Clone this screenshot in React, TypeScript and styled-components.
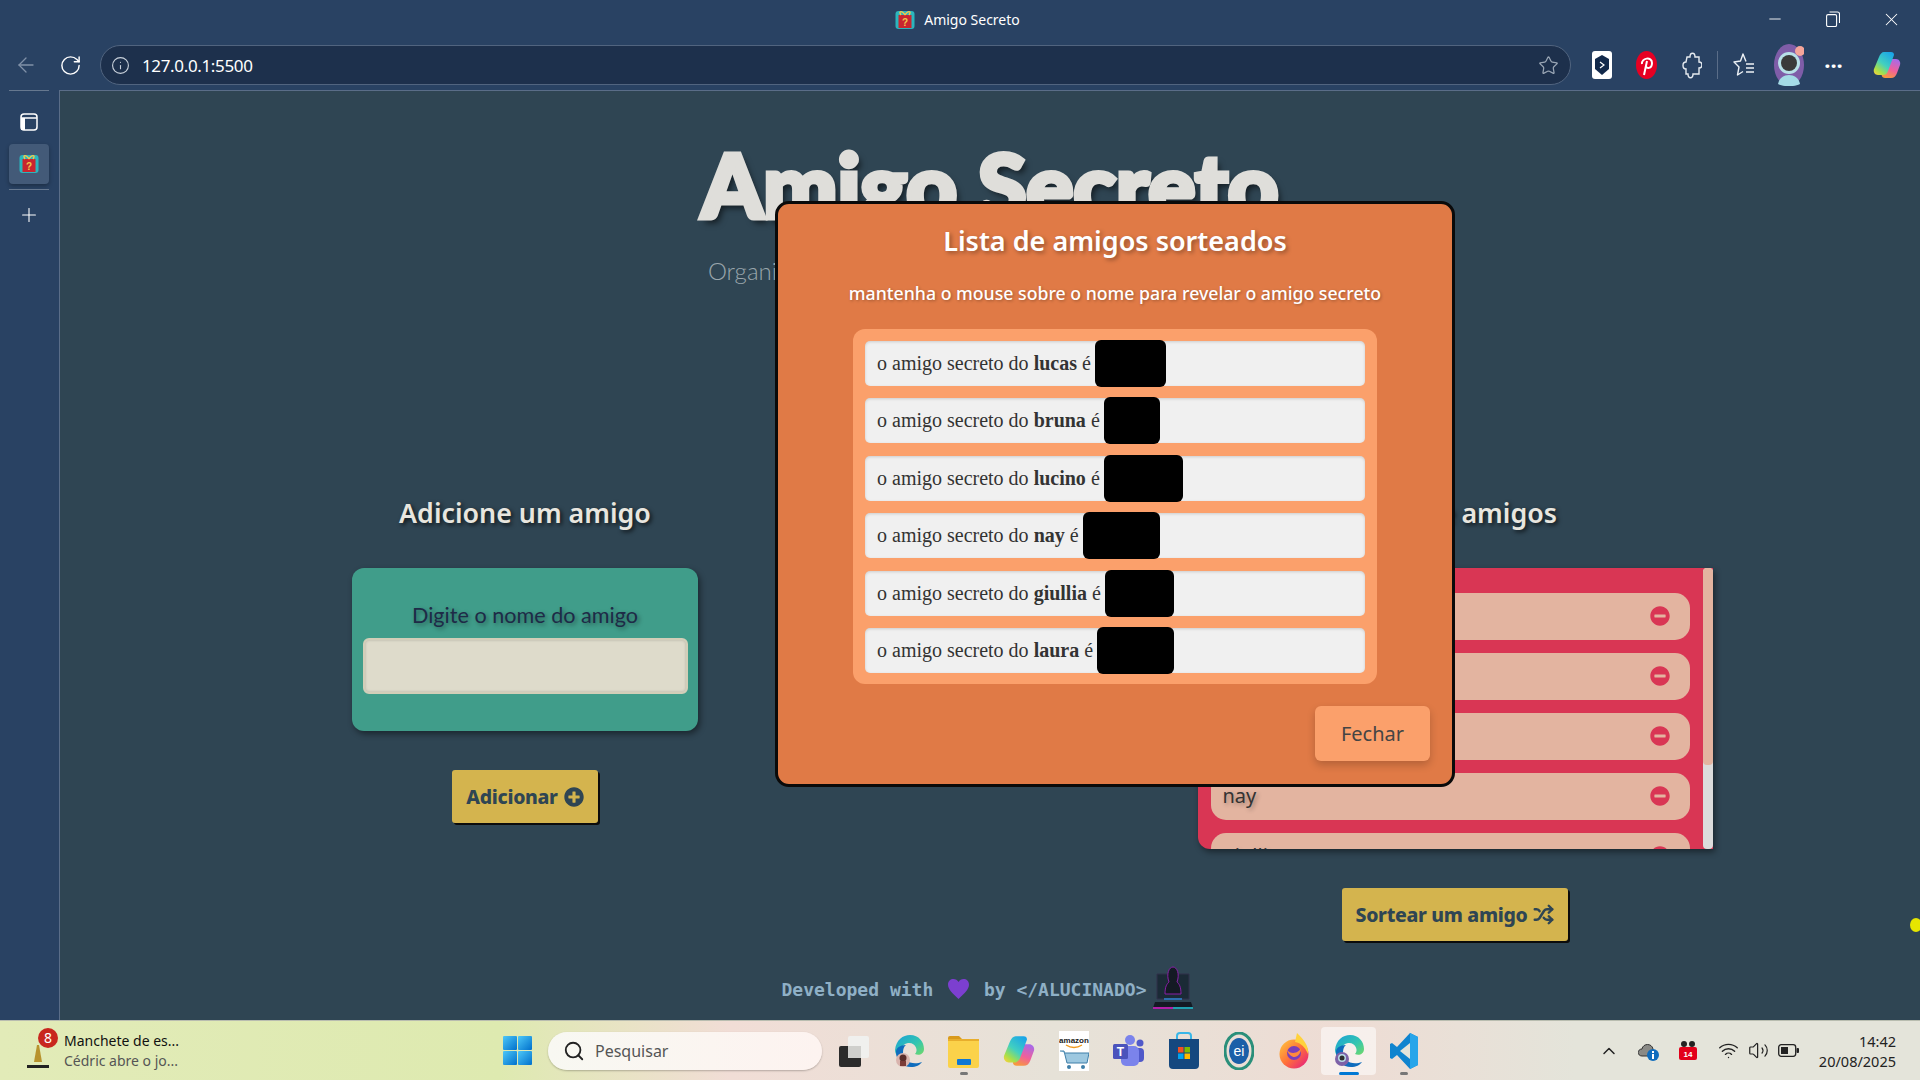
import { ArrowLeft, Info, Minus, Plus, RotateCw, Search, Shuffle, Star, X, ChevronUp, Wifi, Volume2 } from "lucide-react"
import { FaMinusCircle, FaPlusCircle } from "react-icons/fa"
import styled, { createGlobalStyle } from "styled-components"

const GlobalStyle = createGlobalStyle`
  html, body {
    margin: 0;
    height: 100%;
    overflow: hidden;
  }
  * {
    box-sizing: border-box;
  }
`

const sorteados = [
  { name: "lucas", width: 71 },
  { name: "bruna", width: 56 },
  { name: "lucino", width: 79 },
  { name: "nay", width: 77 },
  { name: "giullia", width: 69 },
  { name: "laura", width: 77 },
]

const amigos = ["lucas", "bruna", "lucino", "nay", "giullia", "laura"]

const GiftIcon = ({ size = 20 }: { size?: number }) => (
  <svg width={size} height={size} viewBox="0 0 20 20">
    <rect x="0.5" y="1" width="19" height="18" rx="3" fill="#2bb5bd" />
    <rect x="3.5" y="5" width="13" height="13" fill="#c9252f" />
    <path d="M10 5 C7 0 3 1 6 5 M10 5 C13 0 17 1 14 5" fill="none" stroke="#f2c94c" strokeWidth="1.4" />
    <text x="10" y="15.5" fontSize="10" fontWeight="700" fontFamily="Liberation Sans, sans-serif" textAnchor="middle" fill="#f2c94c">?</text>
  </svg>
)

const CopilotIcon = ({ size = 28, id }: { size?: number; id: string }) => (
  <svg width={size} height={size} viewBox="0 0 28 28">
    <defs>
      <linearGradient id={`${id}A`} x1="0.8" y1="0" x2="0.1" y2="1">
        <stop offset="0" stopColor="#1aa5e8" />
        <stop offset="0.5" stopColor="#42d0c0" />
        <stop offset="0.8" stopColor="#a6e04a" />
        <stop offset="1" stopColor="#f4d23c" />
      </linearGradient>
      <linearGradient id={`${id}B`} x1="0.7" y1="0" x2="0.3" y2="1">
        <stop offset="0" stopColor="#a86ae8" />
        <stop offset="0.55" stopColor="#f0609a" />
        <stop offset="1" stopColor="#f79a3c" />
      </linearGradient>
    </defs>
    <path d="M19 8 h4 c3 0 5 3 4 6 l-3 8 c-1 3 -3 5 -6 5 h-6 c-3 0 -4 -3 -3 -5 l6 -10 c1 -3 2 -4 4 -4z" fill={`url(#${id}B)`} />
    <path d="M11 1 h7 c2 0 3 1 3 3 l-6 16 c-1 3 -3 4 -5 4 h-5 c-3 0 -5 -3 -4 -6 l5 -12 c1 -3 3 -5 5 -5z" fill={`url(#${id}A)`} />
  </svg>
)

const EdgeIcon = ({ badge }: { badge: "photo" | "astro" }) => (
  <svg width="32" height="34" viewBox="0 0 32 34">
    <defs>
      <linearGradient id={`edge-${badge}`} x1="0" y1="0" x2="1" y2="1">
        <stop offset="0" stopColor="#1a9fd8" />
        <stop offset="0.55" stopColor="#33c6b0" />
        <stop offset="1" stopColor="#7edc5a" />
      </linearGradient>
    </defs>
    <path d="M2 16 C3 6 10 1 17 1 C26 1 31 8 31 15 C31 20 26 22 22 20 C26 16 22 8 15 9 C8 10 6 18 9 24 C5 24 2 20 2 16z" fill={`url(#edge-${badge})`} />
    <path d="M3 18 C3 27 10 33 18 33 C23 33 27 31 29 28 C24 30 17 30 13 26 C9 22 9 14 13 11 C7 11 3 14 3 18z" fill="#0f6cbd" />
    {badge === "photo" ? (
      <>
        <circle cx="10" cy="26" r="7" fill="#d9b4ae" />
        <circle cx="10" cy="24" r="3.5" fill="#5a2d2a" />
        <rect x="7" y="27" width="6" height="5" fill="#7a3c38" />
      </>
    ) : (
      <>
        <circle cx="9" cy="25" r="7" fill="#7d62a8" />
        <circle cx="9" cy="24" r="4" fill="#b8dbe6" />
        <circle cx="9" cy="24" r="2.5" fill="#2e2e2e" />
      </>
    )}
  </svg>
)

const ExplorerIcon = () => (
  <svg width="31" height="36" viewBox="0 0 31 36">
    <path d="M0 5 a2 2 0 0 1 2 -2 h9 l3 3 h-14z" fill="#d99a1c" />
    <path d="M0 6 h31 v27 a2 2 0 0 1 -2 2 h-27 a2 2 0 0 1 -2 -2z" fill="#fbd24a" />
    <path d="M0 6 h31 v2 h-31z" fill="#e8ae2c" />
    <rect x="9" y="26" width="14" height="6" rx="1" fill="#0f78d4" />
  </svg>
)

const AmazonIcon = () => (
  <svg width="30" height="40" viewBox="0 0 30 40">
    <rect width="30" height="40" fill="#fff" />
    <text x="15" y="12" fontSize="8" fontWeight="700" fontFamily="Liberation Sans, sans-serif" textAnchor="middle" fill="#222">amazon</text>
    <path d="M7 14 Q15 19 23 14" fill="none" stroke="#f09a1e" strokeWidth="1.4" />
    <path d="M1 20 h4 l3 12 h20 l2 -10 h-24" fill="#9dc8e0" stroke="#3f7fa8" strokeWidth="1" />
    <circle cx="10" cy="36" r="2" fill="#3f7fa8" />
    <circle cx="24" cy="36" r="2" fill="#3f7fa8" />
  </svg>
)

const TeamsIcon = () => (
  <svg width="32" height="34" viewBox="0 0 32 34">
    <circle cx="17" cy="6" r="5" fill="#7b83eb" />
    <circle cx="27" cy="9" r="3.5" fill="#5059c9" />
    <rect x="20" y="14" width="11" height="14" rx="4" fill="#5059c9" />
    <rect x="8" y="12" width="18" height="20" rx="5" fill="#7b83eb" />
    <rect x="0" y="10" width="15" height="15" rx="1.5" fill="#4b53bc" />
    <text x="7.5" y="22" fontSize="12" fontWeight="700" fontFamily="Liberation Sans, sans-serif" textAnchor="middle" fill="#fff">T</text>
  </svg>
)

const StoreIcon = () => (
  <svg width="30" height="38" viewBox="0 0 30 38">
    <path d="M8 7 V4 a3 3 0 0 1 3 -3 h8 a3 3 0 0 1 3 3 v3" fill="none" stroke="#38b6e8" strokeWidth="2" />
    <path d="M0 7 h30 v26 a4 4 0 0 1 -4 4 h-22 a4 4 0 0 1 -4 -4z" fill="#15487f" />
    <rect x="9" y="15" width="5.5" height="5.5" fill="#f25022" />
    <rect x="15.5" y="15" width="5.5" height="5.5" fill="#7fba00" />
    <rect x="9" y="21.5" width="5.5" height="5.5" fill="#00a4ef" />
    <rect x="15.5" y="21.5" width="5.5" height="5.5" fill="#ffb900" />
  </svg>
)

const EiIcon = () => (
  <svg width="30" height="38" viewBox="0 0 30 38">
    <ellipse cx="15" cy="19" rx="14" ry="18" fill="none" stroke="#2a8f7a" strokeWidth="3" />
    <ellipse cx="15" cy="19" rx="10" ry="13" fill="#1a5fa8" />
    <text x="15" y="24" fontSize="14" fontFamily="Liberation Sans, sans-serif" textAnchor="middle" fill="#fff">ei</text>
  </svg>
)

const FirefoxIcon = () => (
  <svg width="30" height="36" viewBox="0 0 30 36">
    <defs>
      <linearGradient id="fox" x1="0" y1="0" x2="1" y2="1">
        <stop offset="0" stopColor="#ffcb3c" />
        <stop offset="0.5" stopColor="#ff7139" />
        <stop offset="1" stopColor="#e31587" />
      </linearGradient>
    </defs>
    <circle cx="15" cy="21" r="14.5" fill="url(#fox)" />
    <path d="M18 0 C24 6 30 12 29 21 C26 14 22 10 16 9z" fill="#ffd23c" />
    <circle cx="15" cy="20" r="7" fill="#7b3fb8" />
    <path d="M8 17 C12 22 20 20 22 15 C22 25 12 28 8 17z" fill="#ff8a3c" />
  </svg>
)

const VsCodeIcon = () => (
  <svg width="28" height="36" viewBox="0 0 28 36">
    <path d="M20 0 L28 4 V32 L20 36 L7 22 L2 26 L0 25 V11 L2 10 L7 14z" fill="#0f84cf" />
    <path d="M20 0 L28 4 V32 L20 36z" fill="#27a5ea" />
    <path d="M20 10 V26 L10 18z" fill="#e4e4da" />
  </svg>
)

const TaskViewIcon = () => (
  <svg width="30" height="32" viewBox="0 0 30 32">
    <rect x="9" y="1" width="21" height="22" rx="2" fill="#f0f0ee" />
    <rect x="0" y="11" width="22" height="21" rx="2" fill="#2b2b2b" />
    <rect x="9" y="11" width="13" height="12" fill="#cfcfcc" />
  </svg>
)

const WindowsLogo = () => (
  <svg width="29" height="29" viewBox="0 0 29 29">
    <defs>
      <linearGradient id="win" x1="0" y1="0" x2="1" y2="1">
        <stop offset="0" stopColor="#4dc8f8" />
        <stop offset="1" stopColor="#0070cc" />
      </linearGradient>
    </defs>
    <rect width="14" height="14" rx="1" fill="url(#win)" />
    <rect x="15" width="14" height="14" rx="1" fill="url(#win)" />
    <rect y="15" width="14" height="14" rx="1" fill="url(#win)" />
    <rect x="15" y="15" width="14" height="14" rx="1" fill="url(#win)" />
  </svg>
)

const Avatar = () => (
  <svg width="30" height="42" viewBox="0 0 30 42">
    <ellipse cx="15" cy="21" rx="15" ry="21" fill="#7f5da8" />
    <path d="M4 40 C6 28 24 28 26 40 C20 43 10 43 4 40z" fill="#a4dbe6" />
    <circle cx="15" cy="19" r="11" fill="#b8e0e8" />
    <circle cx="15" cy="19" r="8" fill="#3a3a3a" />
    <circle cx="26" cy="7" r="5" fill="#f5a59a" />
  </svg>
)

const HackerIcon = () => (
  <svg width="42" height="44" viewBox="0 0 42 44">
    <path d="M5 8 H37 V33 H5z" fill="#1b2a36" stroke="#30304a" />
    <path d="M13 28 C13 20 15 18 17 16 C14 8 17 1 21 1 C25 1 28 8 25 16 C27 18 29 20 29 28z" fill="#141a24" stroke="#8a1fa8" strokeWidth="1" />
    <path d="M12 33 H30" stroke="#2d6fb0" strokeWidth="2" />
    <path d="M3 36 H39 L41 42 H1z" fill="#141a24" />
    <path d="M1 42 H21" stroke="#b01fa8" strokeWidth="2" />
    <path d="M21 42 H41" stroke="#1fa0b0" strokeWidth="2" />
  </svg>
)

const HeartIcon = () => (
  <svg width="21" height="22" viewBox="0 0 21 22">
    <path d="M10.5 21 C4 15 0 11 0 6.5 C0 3 2.5 1 5.5 1 C7.5 1 9.5 2 10.5 4 C11.5 2 13.5 1 15.5 1 C18.5 1 21 3 21 6.5 C21 11 17 15 10.5 21z" fill="#7c3fd0" />
  </svg>
)

const App = () => {
  return (
    <Screen>
      <GlobalStyle />
      <TitleBar>
        <span />
        <WindowTitle>
          <GiftIcon />
          Amigo Secreto
        </WindowTitle>
        <WindowControls>
          <WindowControl><Minus size={18} strokeWidth={1.2} /></WindowControl>
          <WindowControl>
            <svg width="14" height="16" viewBox="0 0 14 16">
              <rect x="0.6" y="3.6" width="10" height="12" rx="1.5" fill="none" stroke="#fff" strokeWidth="1.1" />
              <path d="M3.5 1 H11.5 a2 2 0 0 1 2 2 V12" fill="none" stroke="#fff" strokeWidth="1.1" />
            </svg>
          </WindowControl>
          <WindowControl><X size={21} strokeWidth={1.2} /></WindowControl>
        </WindowControls>
      </TitleBar>
      <Toolbar>
        <NavButton $dim><ArrowLeft size={24} strokeWidth={1.3} /></NavButton>
        <NavButton><RotateCw size={23} strokeWidth={1.5} /></NavButton>
        <AddressBar>
          <Info size={19} strokeWidth={1.4} color="#c9d1db" />
          <AddressText>127.0.0.1:5500</AddressText>
          <AddressStar><Star size={21} strokeWidth={1.4} color="#9aa6b5" /></AddressStar>
        </AddressBar>
        <ToolButton>
          <svg width="20" height="28" viewBox="0 0 20 28">
            <rect width="20" height="28" rx="3" fill="#fff" />
            <path d="M10 4 L17 8 V18 L10 24 L3 18 V8z" fill="#12294b" />
            <path d="M8 11 L12 14 L8 17" fill="none" stroke="#fff" strokeWidth="1.2" />
          </svg>
        </ToolButton>
        <ToolButton>
          <svg width="21" height="28" viewBox="0 0 21 28">
            <ellipse cx="10.5" cy="14" rx="10.5" ry="14" fill="#e60023" />
            <path d="M8 24 L11 10 M6 13 C5 7 16 5 16 12 C16 18 10 18 10 15" fill="none" stroke="#fff" strokeWidth="2" />
          </svg>
        </ToolButton>
        <ToolButton>
          <svg width="20" height="28" viewBox="0 0 20 28">
            <path d="M5 6 H8 C8 1 13 1 13 6 H17 V11 C21 11 21 17 17 17 V23 H11 C11 28 6 28 6 23 H4 V18 C0 18 0 11 4 11z" fill="none" stroke="#e6ebf0" strokeWidth="1.4" />
          </svg>
        </ToolButton>
        <ToolDivider />
        <ToolButton>
          <svg width="22" height="26" viewBox="0 0 22 26">
            <path d="M13 9.5 L10 2 L7.5 9 L1 10 L6 15 L4.5 23 L10 19.5" fill="none" stroke="#eef2f6" strokeWidth="1.4" strokeLinejoin="round" />
            <path d="M13 12 H21 M13 16 H21 M13 20 H21" stroke="#eef2f6" strokeWidth="1.4" />
          </svg>
        </ToolButton>
        <ToolButton><Avatar /></ToolButton>
        <ToolButton><MoreDots>···</MoreDots></ToolButton>
        <CopilotButton><CopilotIcon id="copTool" /></CopilotButton>
      </Toolbar>
      <Body>
        <SideBar>
          <SideLine />
          <TabsIcon>
            <svg width="18" height="18" viewBox="0 0 18 18">
              <rect x="1" y="1" width="16" height="16" rx="3" fill="none" stroke="#fff" strokeWidth="1.5" />
              <path d="M1 5 H17" stroke="#fff" strokeWidth="1.5" />
              <rect x="1" y="5" width="4" height="12" fill="#fff" />
            </svg>
          </TabsIcon>
          <ActiveTab><GiftIcon /></ActiveTab>
          <SideLine />
          <SideIcon><Plus size={22} strokeWidth={1.2} /></SideIcon>
        </SideBar>
        <Page>
          <Hero>
            <MainTitle>Amigo Secreto</MainTitle>
            <Subtitle>Organize seu sorteio de amigo secreto de forma online</Subtitle>
          </Hero>
          <Columns>
            <Column>
              <SectionTitle>Adicione um amigo</SectionTitle>
              <InputCard>
                <InputLabel>Digite o nome do amigo</InputLabel>
                <NameInput type="text" />
              </InputCard>
              <ActionButton>
                Adicionar
                <FaPlusCircle size={20} />
              </ActionButton>
            </Column>
            <Column>
              <SectionTitle>Lista de amigos</SectionTitle>
              <ListCard>
                <ListScroll>
                  {amigos.map((nome) => (
                    <FriendItem key={nome}>
                      {nome}
                      <FaMinusCircle size={20} color="#d93654" />
                    </FriendItem>
                  ))}
                </ListScroll>
                <ScrollTrack><ScrollThumb /></ScrollTrack>
              </ListCard>
              <ActionButton>
                Sortear um amigo
                <Shuffle size={21} strokeWidth={2.8} />
              </ActionButton>
            </Column>
          </Columns>
          <Footer>
            Developed with <HeartIcon /> by &lt;/ALUCINADO&gt;
            <HackerMark><HackerIcon /></HackerMark>
          </Footer>
          <Modal>
            <ModalTitle>Lista de amigos sorteados</ModalTitle>
            <ModalHint>mantenha o mouse sobre o nome para revelar o amigo secreto</ModalHint>
            <ResultList>
              {sorteados.map((item) => (
                <ResultRow key={item.name}>
                  <span>o amigo secreto do <b>{item.name}</b> é</span>
                  <Spoiler $width={item.width} />
                </ResultRow>
              ))}
            </ResultList>
            <CloseButton>Fechar</CloseButton>
          </Modal>
          <CursorDot />
        </Page>
      </Body>
      <TaskBar>
        <NewsWidget>
          <NewsLogo>
            <svg width="24" height="30" viewBox="0 0 24 30">
              <path d="M11 4 L13 4 L16 21 H8z" fill="#b8932e" />
              <rect x="1" y="24" width="22" height="3" fill="#222" />
            </svg>
            <NewsBadge>8</NewsBadge>
          </NewsLogo>
          <NewsText>
            <NewsHead>Manchete de es...</NewsHead>
            <NewsSub>Cédric abre o jo...</NewsSub>
          </NewsText>
        </NewsWidget>
        <TaskCenter>
          <TaskIcon $width={29}><WindowsLogo /></TaskIcon>
          <SearchPill>
            <Search size={22} strokeWidth={2} color="#222" />
            Pesquisar
          </SearchPill>
          <TaskIcon><TaskViewIcon /></TaskIcon>
          <TaskIcon><EdgeIcon badge="photo" /></TaskIcon>
          <TaskIcon $running><ExplorerIcon /></TaskIcon>
          <TaskIcon><CopilotIcon size={32} id="copTask" /></TaskIcon>
          <TaskIcon><AmazonIcon /></TaskIcon>
          <TaskIcon><TeamsIcon /></TaskIcon>
          <TaskIcon><StoreIcon /></TaskIcon>
          <TaskIcon><EiIcon /></TaskIcon>
          <TaskIcon><FirefoxIcon /></TaskIcon>
          <TaskIcon $active><EdgeIcon badge="astro" /></TaskIcon>
          <TaskIcon $running><VsCodeIcon /></TaskIcon>
        </TaskCenter>
        <Tray>
          <TrayIcon $width={48}><ChevronUp size={20} strokeWidth={1.8} /></TrayIcon>
          <TrayIcon $width={32}>
            <svg width="22" height="22" viewBox="0 0 22 22">
              <path d="M4 16 C-1 16 -1 9 4 9 C5 3 14 3 15 9 L15 16z" fill="#8a8a86" stroke="#333" />
              <circle cx="15" cy="15" r="6" fill="#0f6cbd" />
              <rect x="14" y="14" width="2" height="5" fill="#fff" />
              <rect x="14" y="11" width="2" height="2" fill="#fff" />
            </svg>
          </TrayIcon>
          <TrayIcon $width={46}>
            <svg width="20" height="20" viewBox="0 0 20 20">
              <rect x="1" y="6" width="18" height="13" rx="2" fill="#e2001a" />
              <circle cx="6" cy="3" r="3" fill="#222" />
              <circle cx="14" cy="3" r="3" fill="#222" />
              <text x="10" y="16" fontSize="8" fontWeight="700" fontFamily="Liberation Sans, sans-serif" textAnchor="middle" fill="#fff">14</text>
            </svg>
          </TrayIcon>
          <TrayIcon $width={36}><Wifi size={21} strokeWidth={1.6} /></TrayIcon>
          <TrayIcon $width={24}><Volume2 size={21} strokeWidth={1.4} /></TrayIcon>
          <TrayIcon $width={36}>
            <svg width="21" height="13" viewBox="0 0 21 13">
              <rect x="0.7" y="0.7" width="17" height="11.6" rx="2.5" fill="none" stroke="#222" strokeWidth="1.3" />
              <rect x="3" y="3" width="7" height="7" fill="#222" />
              <rect x="18.5" y="4" width="2.5" height="5" rx="1" fill="#222" />
            </svg>
          </TrayIcon>
          <Clock>
            <span>14:42</span>
            <span>20/08/2025</span>
          </Clock>
        </Tray>
      </TaskBar>
    </Screen>
  )
}

export default App

const Screen = styled.div`
  width: 1920px;
  height: 1080px;
  display: flex;
  flex-direction: column;
  background: #294263;
  font-family: "Noto Sans", sans-serif;
  overflow: hidden;
`

const TitleBar = styled.div`
  height: 45px;
  display: grid;
  grid-template-columns: 1fr auto 1fr;
  align-items: center;
  color: #fff;
`

const WindowTitle = styled.div`
  display: flex;
  align-items: center;
  gap: 9px;
  font-size: 14px;
  margin: -6px 5px 0 0;
`

const WindowControls = styled.div`
  display: flex;
  justify-content: flex-end;
  margin-top: -7px;
`

const WindowControl = styled.div`
  width: 58px;
  height: 38px;
  display: flex;
  align-items: center;
  justify-content: center;
  color: #fff;
`

const Toolbar = styled.div`
  height: 45px;
  display: flex;
  align-items: center;
  padding: 0 11px 5px 3px;
`

const NavButton = styled.div<{ $dim?: boolean }>`
  width: 45px;
  display: flex;
  justify-content: center;
  color: ${(p) => (p.$dim ? "#8091a8" : "#fff")};
`

const AddressBar = styled.div`
  flex: 1;
  height: 40px;
  margin: 0 8px 0 7px;
  padding: 0 11px 0 10px;
  display: flex;
  align-items: center;
  gap: 12px;
  background: #1d304c;
  border: 1px solid #51647f;
  border-radius: 20px;
`

const AddressText = styled.span`
  color: #fff;
  font-size: 17px;
  letter-spacing: -0.35px;
`

const AddressStar = styled.span`
  margin-left: auto;
  display: flex;
`

const ToolButton = styled.div`
  width: 45px;
  height: 42px;
  display: flex;
  align-items: center;
  justify-content: center;
`

const ToolDivider = styled.div`
  width: 1px;
  height: 28px;
  margin: 0 3px;
  background: #5a6d88;
`

const MoreDots = styled.span`
  color: #fff;
  font-size: 22px;
  font-weight: 700;
`

const CopilotButton = styled(ToolButton)`
  margin-left: 8px;
`

const Body = styled.div`
  flex: 1;
  display: flex;
  min-height: 0;
`

const SideBar = styled.div`
  width: 59px;
  flex-shrink: 0;
  display: flex;
  flex-direction: column;
  align-items: center;
  padding-right: 1px;
`

const SideLine = styled.div`
  width: 40px;
  height: 1px;
  background: #66788f;
`

const SideIcon = styled.div`
  height: 50px;
  display: flex;
  align-items: center;
  justify-content: center;
  color: #fff;
`

const TabsIcon = styled(SideIcon)`
  height: 52px;
  padding-top: 10px;
`

const ActiveTab = styled.div`
  width: 40px;
  height: 40px;
  margin: 1px 0 5px;
  display: flex;
  align-items: center;
  justify-content: center;
  background: #435a78;
  border-radius: 4px;
  box-shadow: 0 2px 4px rgba(0, 0, 0, 0.3);
`

const Page = styled.main`
  position: relative;
  flex: 1;
  display: flex;
  flex-direction: column;
  background: #2f4553;
  border-left: 1px solid #5a6d88;
  border-top: 1px solid #5a6d88;
`

const Hero = styled.div`
  height: 380px;
  display: flex;
  flex-direction: column;
  align-items: center;
  padding-top: 40px;
`

const MainTitle = styled.h1`
  margin: 0;
  font-family: "Lato", sans-serif;
  font-weight: 900;
  font-size: 88px;
  line-height: 106px;
  letter-spacing: 0;
  color: #dfdeda;
  -webkit-text-stroke: 5px #dfdeda;
  text-shadow: 4px 5px 6px rgba(0, 0, 0, 0.6);
`

const Subtitle = styled.p`
  margin: 19px 0 0;
  font-family: "Lato", sans-serif;
  font-weight: 300;
  font-size: 24px;
  color: #9aa6ac;
`

const Columns = styled.div`
  display: grid;
  grid-template-columns: 1fr 1fr;
`

const Column = styled.section`
  display: flex;
  flex-direction: column;
  align-items: center;
`

const SectionTitle = styled.h2`
  margin: 20px 0 33px;
  height: 44px;
  font-family: "Noto Sans", sans-serif;
  font-size: 26.8px;
  font-weight: 600;
  line-height: 44px;
  color: #e8e6df;
  text-shadow: 2px 2px 4px rgba(0, 0, 0, 0.7);
`

const InputCard = styled.div`
  width: 346px;
  height: 163px;
  padding-top: 32px;
  display: flex;
  flex-direction: column;
  align-items: center;
  background: #409d8a;
  border-radius: 12px;
  box-shadow: 2px 3px 6px rgba(0, 0, 0, 0.45);
`

const InputLabel = styled.label`
  font-family: "Lato", sans-serif;
  font-size: 21.6px;
  line-height: 30px;
  color: #1e2b47;
  text-shadow: 2px 2px 4px rgba(0, 0, 0, 0.4);
`

const NameInput = styled.input`
  width: 325px;
  height: 56px;
  margin-top: 8px;
  background: #dedbcb;
  border: 2px solid #d2ceb8;
  border-radius: 6px;
  box-shadow: inset 0 0 3px rgba(0, 0, 0, 0.2);
`

const ActionButton = styled.button`
  height: 53px;
  margin-top: 39px;
  padding: 0 14px;
  display: flex;
  align-items: center;
  gap: 6px;
  background: #d4b44e;
  border: none;
  border-radius: 3px;
  box-shadow: 2px 2px 0 #0c0c0c;
  color: #2f4553;
  font-family: "Noto Sans", sans-serif;
  font-size: 19.4px;
  font-weight: 800;
  letter-spacing: -0.3px;
`

const ListCard = styled.div`
  width: 515px;
  height: 281px;
  display: flex;
  background: #d93654;
  border-radius: 12px 0 0 12px;
  box-shadow: 2px 3px 6px rgba(0, 0, 0, 0.45);
  overflow: hidden;
`

const ListScroll = styled.ul`
  flex: 1;
  margin: 0;
  padding: 25px 13px 0 13px;
  list-style: none;
  display: flex;
  flex-direction: column;
  gap: 13px;
  overflow: hidden;
`

const FriendItem = styled.li`
  flex-shrink: 0;
  height: 47px;
  padding: 0 20px 2px 12px;
  display: flex;
  align-items: center;
  justify-content: space-between;
  background: #e3b4a0;
  border-radius: 15px;
  color: #333;
  font-family: "Noto Sans", sans-serif;
  font-size: 20px;
  text-shadow: 2px 2px 4px rgba(0, 0, 0, 0.3);
`

const ScrollTrack = styled.div`
  width: 10px;
  flex-shrink: 0;
  background: #dcdcdc;
  border-radius: 4px;
`

const ScrollThumb = styled.div`
  height: 197px;
  background: #e3b4a0;
  border-radius: 4px;
`

const Footer = styled.footer`
  margin-top: auto;
  height: 62px;
  display: flex;
  align-items: center;
  justify-content: center;
  font-family: "DejaVu Sans Mono", monospace;
  font-size: 18px;
  font-weight: 700;
  white-space: pre;
  color: #8fb0c6;

  svg {
    margin: 0 4px;
  }
`

const HackerMark = styled.span`
  display: flex;
  margin: -2px 0 0 2px;
`

const Modal = styled.div`
  position: absolute;
  left: 715px;
  top: 110px;
  width: 680px;
  height: 586px;
  display: flex;
  flex-direction: column;
  align-items: center;
  background: #e07a46;
  border: 3px solid #0a0a0a;
  border-radius: 14px;
  padding-top: 17px;
`

const ModalTitle = styled.h2`
  margin: 0;
  font-family: "Noto Sans", sans-serif;
  font-size: 27px;
  font-weight: 600;
  line-height: 40px;
  color: #fff;
  text-shadow: 2px 2px 4px rgba(0, 0, 0, 0.35);
`

const ModalHint = styled.p`
  margin: 18px 0 0;
  font-family: "Noto Sans", sans-serif;
  font-size: 17.7px;
  font-weight: 500;
  line-height: 28px;
  color: #fff;
  text-shadow: 1px 1px 3px rgba(0, 0, 0, 0.3);
`

const ResultList = styled.div`
  width: 524px;
  height: 355px;
  margin-top: 22px;
  padding: 12px;
  display: flex;
  flex-direction: column;
  gap: 12.4px;
  background: #fba06b;
  border-radius: 12px;
`

const ResultRow = styled.div`
  height: 45px;
  flex-shrink: 0;
  padding-left: 12px;
  display: flex;
  align-items: center;
  gap: 4px;
  background: #f0f0f0;
  border-radius: 5px;
  box-shadow: inset 0 1px 3px rgba(0, 0, 0, 0.15);
  color: #333;
  font-family: "Liberation Serif", serif;
  font-size: 20px;
`

const Spoiler = styled.span<{ $width: number }>`
  width: ${(p) => p.$width}px;
  height: 47px;
  margin: -1px 0;
  background: #000;
  border-radius: 6px;
`

const CloseButton = styled.button`
  align-self: flex-end;
  width: 115px;
  height: 55px;
  margin: 22px 22px 0 0;
  background: #fba06b;
  border: none;
  border-radius: 6px;
  box-shadow: 0 4px 8px rgba(0, 0, 0, 0.2);
  color: #444;
  font-family: "Noto Sans", sans-serif;
  font-size: 20px;
`

const CursorDot = styled.div`
  position: absolute;
  right: -2px;
  top: 827px;
  width: 12px;
  height: 14px;
  border-radius: 50%;
  background: #e6e600;
`

const TaskBar = styled.div`
  height: 60px;
  flex-shrink: 0;
  position: relative;
  display: flex;
  align-items: center;
  border-top: 1px solid #b9bdb0;
  background: linear-gradient(90deg, #e2ebb8 0%, #deeab0 26%, #f1ddd6 38%, #e6e2d8 55%, #eedcd4 70%, #e4e4da 82%);
`

const NewsWidget = styled.div`
  width: 503px;
  flex-shrink: 0;
  padding-left: 26px;
  display: flex;
  align-items: center;
`

const NewsLogo = styled.div`
  position: relative;
  width: 38px;
  display: flex;
  margin-top: 10px;
`

const NewsBadge = styled.span`
  position: absolute;
  left: 12px;
  top: -13px;
  width: 20px;
  height: 20px;
  display: flex;
  align-items: center;
  justify-content: center;
  background: #c8271e;
  border-radius: 50%;
  color: #fff;
  font-size: 14px;
`

const NewsText = styled.div`
  display: flex;
  flex-direction: column;
  font-size: 14px;
  line-height: 20px;
`

const NewsHead = styled.span`
  color: #111;
`

const NewsSub = styled.span`
  color: #555;
`

const TaskCenter = styled.div`
  display: flex;
  align-items: center;
`

const TaskIcon = styled.div<{ $active?: boolean; $running?: boolean; $width?: number }>`
  position: relative;
  width: ${(p) => p.$width ?? 55}px;
  height: 48px;
  display: flex;
  align-items: center;
  justify-content: center;
  border-radius: 4px;
  background: ${(p) => (p.$active ? "rgba(255, 255, 255, 0.55)" : "transparent")};

  &::after {
    content: "";
    display: ${(p) => (p.$active || p.$running ? "block" : "none")};
    position: absolute;
    bottom: 0;
    left: 50%;
    transform: translateX(-50%);
    width: ${(p) => (p.$active ? 20 : 8)}px;
    height: 3px;
    border-radius: 2px;
    background: ${(p) => (p.$active ? "#0078d4" : "#777")};
  }
`

const SearchPill = styled.div`
  width: 274px;
  height: 38px;
  margin: 0 4px 0 16px;
  padding-left: 15px;
  display: flex;
  align-items: center;
  gap: 10px;
  background: linear-gradient(90deg, #f8f8f2, #fdf3f0);
  border-radius: 19px;
  box-shadow: 0 1px 2px rgba(0, 0, 0, 0.25);
  color: #555;
  font-size: 16px;
`

const Tray = styled.div`
  margin-left: auto;
  padding-right: 24px;
  display: flex;
  align-items: center;
  color: #222;
`

const TrayIcon = styled.div<{ $width: number }>`
  width: ${(p) => p.$width}px;
  display: flex;
  justify-content: center;
`

const Clock = styled.div`
  margin-left: 12px;
  display: flex;
  flex-direction: column;
  align-items: flex-end;
  font-size: 14.5px;
  line-height: 20px;
  color: #222;
`
